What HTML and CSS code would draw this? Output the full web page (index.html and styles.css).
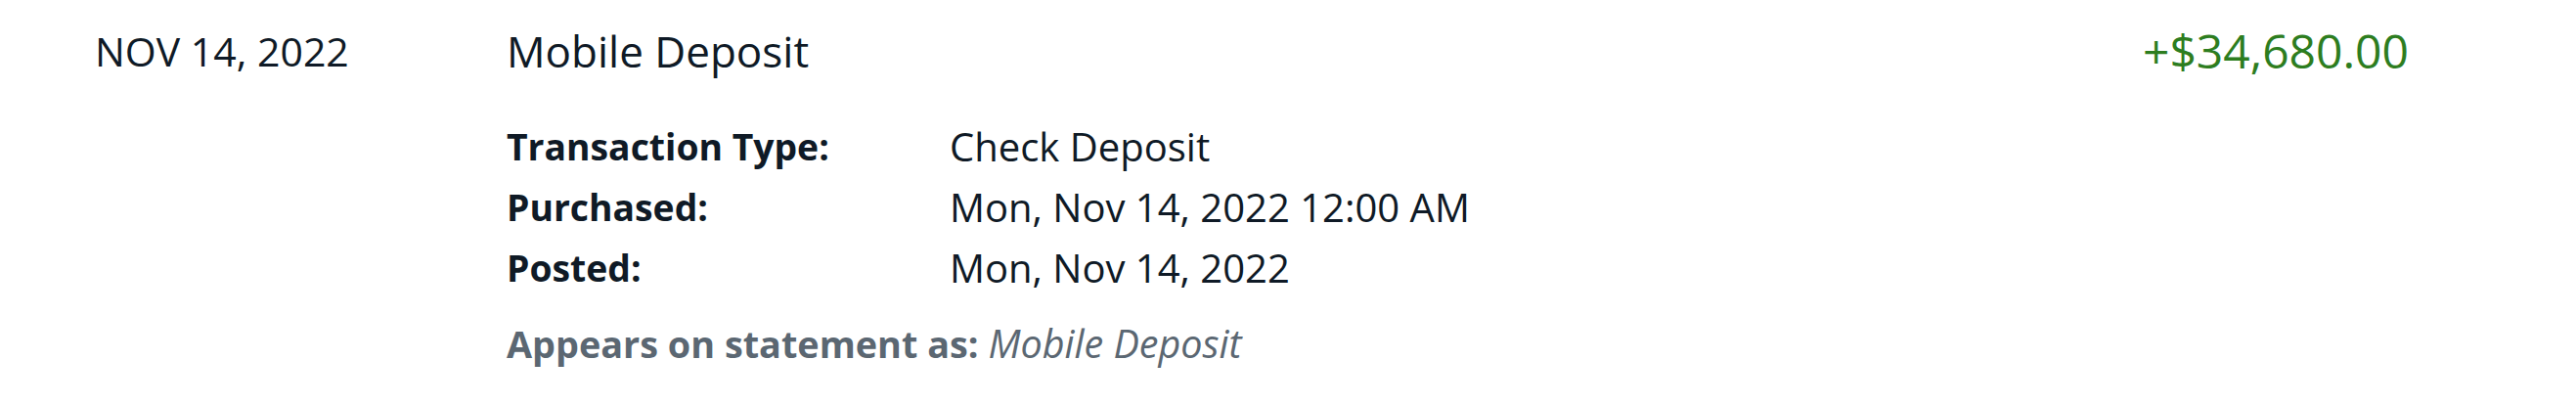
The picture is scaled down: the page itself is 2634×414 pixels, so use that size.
FILE: index.html
```html
<!DOCTYPE html>
<html lang="en">
<head>
<meta charset="utf-8">
<title>Transaction</title>
<link rel="stylesheet" href="styles.css">
</head>
<body>
<div class="txn">
  <div class="txn-date">NOV 14, 2022</div>
  <div class="txn-main">
    <div class="txn-title">Mobile Deposit</div>
    <dl class="txn-details">
      <dt>Transaction Type:</dt>
      <dd>Check Deposit</dd>
      <dt>Purchased:</dt>
      <dd>Mon, Nov 14, 2022 12:00 AM</dd>
      <dt>Posted:</dt>
      <dd>Mon, Nov 14, 2022</dd>
    </dl>
    <p class="txn-statement"><strong>Appears on statement as:</strong> <em>Mobile Deposit</em></p>
  </div>
  <div class="txn-amount">+$34,680.00</div>
</div>
</body>
</html>
```
FILE: styles.css
```css
html, body {
  margin: 0;
  padding: 0;
  background: #ffffff;
}

body {
  font-family: "Open Sans", "Noto Sans", sans-serif;
  color: #0f1a26;
}

.txn {
  display: flex;
  align-items: flex-start;
  padding: 24px 171px 0 97px;
}

.txn-date {
  width: 421px;
  flex: none;
  font-size: 41px;
  line-height: 56px;
}

.txn-main {
  flex: 1;
}

.txn-title {
  font-size: 44px;
  line-height: 56px;
}

.txn-details {
  display: grid;
  grid-template-columns: 453px auto;
  margin: 39px 0 0;
  font-size: 40px;
  line-height: 62px;
}

.txn-details dt {
  font-weight: 700;
  font-size: 37.3px;
}

.txn-details dd {
  margin: 0;
}

.txn-statement {
  margin: 15px 0 0;
  font-size: 37.8px;
  line-height: 62px;
  color: #5b6772;
}

.txn-statement strong {
  font-weight: 700;
}

.txn-statement em {
  font-style: italic;
  font-size: 39.5px;
}

.txn-amount {
  flex: none;
  font-size: 48px;
  line-height: 56px;
  color: #2d7d1f;
}
```
